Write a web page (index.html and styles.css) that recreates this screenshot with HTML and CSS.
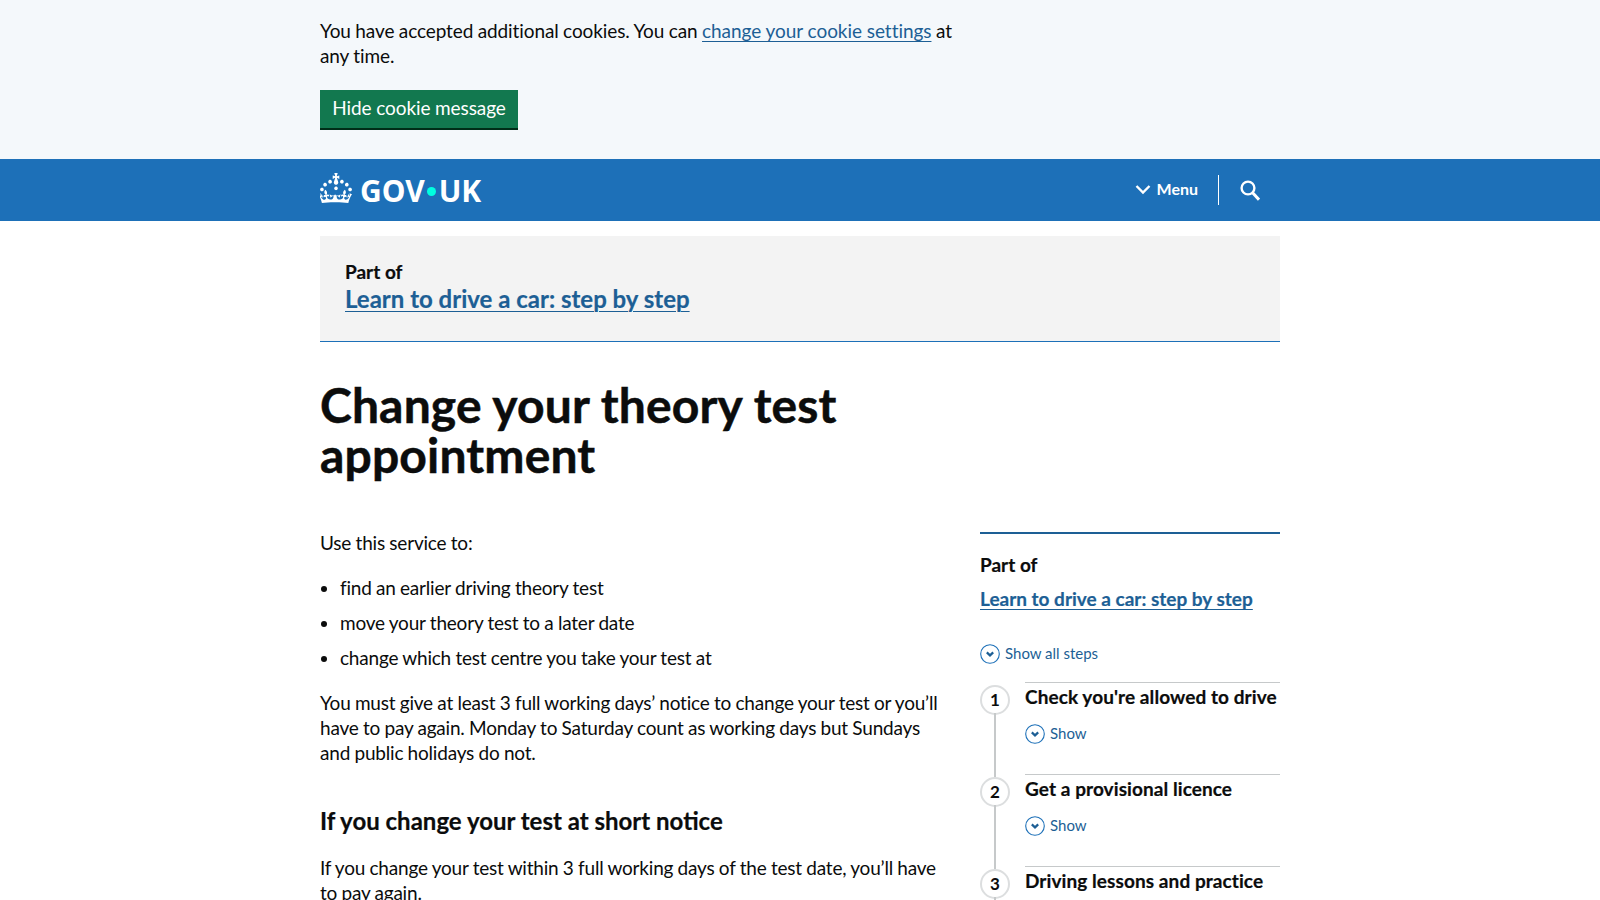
FILE: index.html
```html
<!DOCTYPE html>
<html lang="en">
<head>
<meta charset="utf-8">
<title>Change your theory test appointment - GOV.UK</title>
<link rel="stylesheet" href="styles.css">
</head>
<body>
<div class="cookie">
  <div class="wrap">
    <p class="cookie-text">You have accepted additional cookies. You can <a href="#">change your cookie settings</a> at any time.</p>
    <button class="hide-btn">Hide cookie message</button>
  </div>
</div>
<header class="top">
  <div class="wrap top-in">
    <a class="logo" href="#">
      <svg class="crown" viewBox="0 0 33 30" width="33" height="30" aria-hidden="true">
        <path fill="#fff" d="M22.6 10.4c-1 .4-2-.1-2.4-1-.4-.9.1-2 1-2.4.9-.4 2 .1 2.4 1s-.1 2-1 2.4m-5.9 6.7c-.9.4-2-.1-2.4-1-.4-.9.1-2 1-2.4.9-.4 2 .1 2.4 1s-.1 2-1 2.4m10.8-3.7c-1 .4-2-.1-2.4-1-.4-.9.1-2 1-2.4.9-.4 2 0 2.4 1s0 2-1 2.4m3.3 4.8c-1 .4-2-.1-2.4-1-.4-.9.1-2 1-2.4.9-.4 2-.1 2.4 1 .4.9-.1 2-1 2.4M17 4.7l2.3 1.2V2.5l-2.3.7-.2-.2.9-3h-3.4l.9 3-.2.2c-.1.1-2.3-.7-2.3-.7v3.4L15 4.7c.1.1.1.2.2.2l-1.3 4c-.1.2-.1.4-.1.6 0 1.1.8 2 1.9 2.2h.7c1-.2 1.9-1.1 1.9-2.2 0-.2 0-.4-.1-.6l-1.3-4c-.1-.1 0-.2.1-.2m-7.6 5.7c.9.4 2-.1 2.4-1 .4-.9-.1-2-1-2.4-.9-.4-2 .1-2.4 1s0 2 1 2.4m-5 3c.9.4 2-.1 2.4-1 .4-.9-.1-2-1-2.4-.9-.4-2 .1-2.4 1s.1 2 1 2.4m-3.2 4.8c.9.4 2-.1 2.4-1 .4-1-.1-2-1-2.4-.9-.3-2 .1-2.4 1-.3 1 .1 2 1 2.4m14.8 11c4.4 0 8.6.3 12.3.8 1.1-4.5 2.4-7 3.7-8.8l-2.5-.9c.2 1.3.3 1.9 0 2.7-.4-.4-.8-1.1-1.1-2.3l-1.2 4c.7-.5 1.3-.8 2-.9-1.1 2.5-2.6 3.1-3.5 3-1.1-.2-1.7-1.2-1.5-2.1.3-1.2 1.5-1.5 2.1-.1 1.1-2.3-.8-3-2-2.3 1.9-1.9 2.1-3.5.6-5.6-2.1 1.6-2.1 3.2-1.2 5.5-1.2-1.4-3.2-.6-2.5 1.6.9-1.4 2.1-.5 1.9.8-.2 1.1-1.7 2.1-3.5 1.9-2.7-.2-2.9-2.1-2.9-3.6.7-.1 1.9.5 2.9 1.9l1-3.6c-.9.6-2.1 1.4-3.5 1.4-.9 0-1.7-.4-2-1.3-.4.9-1.1 1.3-2 1.3-1.4 0-2.6-.8-3.5-1.4l1 3.6c1-1.4 2.2-2 2.9-1.9 0 1.6-.2 3.4-2.9 3.6-1.8.2-3.3-.8-3.5-1.9-.2-1.3 1-2.2 1.9-.8.7-2.1-1.3-3-2.5-1.6.9-2.2.9-3.9-1.2-5.5-1.5 2-1.3 3.7.6 5.6-1.2-.7-3.1 0-2 2.3.6-1.4 1.8-1.1 2.1.1.2.9-.3 1.9-1.5 2.1-.9.2-2.4-.5-3.5-3 .6 0 1.2.3 2 .9l-1.2-4c-.3 1.1-.7 1.9-1.1 2.3-.3-.8-.2-1.4 0-2.7l-2.5.9c1.3 1.9 2.6 4.3 3.7 8.8 3.7-.5 7.9-.8 12.3-.8"/>
      </svg>
      <span class="word">GOV<span class="dot"></span>UK</span>
    </a>
    <nav class="nav">
      <span class="menu">
        <svg class="chev" viewBox="0 0 16 11" width="16" height="11" aria-hidden="true"><path d="M1.5 2 8 8.5 14.5 2" fill="none" stroke="#fff" stroke-width="2.4"/></svg>
        Menu
      </span>
      <span class="search">
        <svg viewBox="0 0 20 21" width="20" height="21" aria-hidden="true"><circle cx="8" cy="8" r="6.4" fill="none" stroke="#fff" stroke-width="2.4"/><path d="M12.6 12.8 19 19.6" stroke="#fff" stroke-width="3" fill="none"/></svg>
      </span>
    </nav>
  </div>
</header>
<main class="wrap">
  <div class="partof-box">
    <p class="partof-label">Part of</p>
    <a class="partof-link" href="#">Learn to drive a car: step by step</a>
  </div>
  <h1>Change your theory test appointment</h1>
  <div class="cols">
    <div class="body-col">
      <p>Use this service to:</p>
      <ul>
        <li>find an earlier driving theory test</li>
        <li>move your theory test to a later date</li>
        <li>change which test centre you take your test at</li>
      </ul>
      <p>You must give at least 3 full working days’ notice to change your test or you’ll have to pay again. Monday to Saturday count as working days but Sundays and public holidays do not.</p>
      <h2>If you change your test at short notice</h2>
      <p>If you change your test within 3 full working days of the test date, you’ll have to pay again.</p>
    </div>
    <aside class="side">
      <p class="side-label">Part of</p>
      <a class="side-link" href="#">Learn to drive a car: step by step</a>
      <div class="show-all">
        <svg class="ring" viewBox="0 0 20 20" width="20" height="20" aria-hidden="true"><circle cx="10" cy="10" r="9.3" fill="none" stroke="#1d70b8" stroke-width="1.1"/><path d="M6.8 8.4 10 11.4l3.2-3" fill="none" stroke="#1d5f95" stroke-width="2.2"/></svg>
        <a href="#">Show all steps</a>
      </div>
      <ol class="steps">
        <li class="step">
          <span class="num">1</span>
          <div class="step-main">
            <h3>Check you're allowed to drive</h3>
            <div class="show">
              <svg class="ring" viewBox="0 0 20 20" width="20" height="20" aria-hidden="true"><circle cx="10" cy="10" r="9.3" fill="none" stroke="#1d70b8" stroke-width="1.1"/><path d="M6.8 8.4 10 11.4l3.2-3" fill="none" stroke="#1d5f95" stroke-width="2.2"/></svg>
              <a href="#">Show</a>
            </div>
          </div>
        </li>
        <li class="step">
          <span class="num">2</span>
          <div class="step-main">
            <h3>Get a provisional licence</h3>
            <div class="show">
              <svg class="ring" viewBox="0 0 20 20" width="20" height="20" aria-hidden="true"><circle cx="10" cy="10" r="9.3" fill="none" stroke="#1d70b8" stroke-width="1.1"/><path d="M6.8 8.4 10 11.4l3.2-3" fill="none" stroke="#1d5f95" stroke-width="2.2"/></svg>
              <a href="#">Show</a>
            </div>
          </div>
        </li>
        <li class="step">
          <span class="num">3</span>
          <div class="step-main">
            <h3>Driving lessons and practice</h3>
            <div class="show">
              <svg class="ring" viewBox="0 0 20 20" width="20" height="20" aria-hidden="true"><circle cx="10" cy="10" r="9.3" fill="none" stroke="#1d70b8" stroke-width="1.1"/><path d="M6.8 8.4 10 11.4l3.2-3" fill="none" stroke="#1d5f95" stroke-width="2.2"/></svg>
              <a href="#">Show</a>
            </div>
          </div>
        </li>
      </ol>
    </aside>
  </div>
</main>
</body>
</html>
```
FILE: styles.css
```css
* { box-sizing: border-box; }
html, body { margin: 0; padding: 0; height: 900px; overflow: hidden; }
body { font-family: Lato, "Liberation Sans", sans-serif; font-size: 19px; line-height: 25px; color: #0b0c0c; background: #fff; letter-spacing: -0.2px; word-spacing: -0.3px; }
a { color: #1d5f95; text-decoration: underline; text-underline-offset: 3px; text-decoration-thickness: 1px; }
p { margin: 0; }
.wrap { width: 960px; margin: 0 auto; }

.cookie { background: #f4f8fb; height: 159px; padding-top: 18px; }
.cookie-text { width: 640px; letter-spacing: -0.1px; }
.cookie-text a { word-spacing: 0; letter-spacing: -0.05px; }
.hide-btn { display: block; margin-top: 22px; width: 198px; height: 38px; padding: 0 0 3px; border: 0; background: #12784f; box-shadow: 0 2px 0 #002d18; color: #fff; font: inherit; letter-spacing: -0.1px; word-spacing: 0; }

.top { background: #1d70b8; height: 62px; }
.top-in { display: flex; align-items: center; justify-content: space-between; height: 62px; }
.logo { display: flex; align-items: center; gap: 7px; color: #fff; text-decoration: none; }
.crown { display: block; margin-bottom: 4px; }
.word { font-family: "Noto Sans", sans-serif; font-weight: 700; font-size: 30px; line-height: 34px; display: flex; align-items: center; letter-spacing: 0; padding-top: 2px; }
.dot { width: 9px; height: 9px; border-radius: 50%; background: #00ffe0; margin: 0 2.5px; }
.nav { display: flex; align-items: center; height: 32px; padding-right: 20px; }
.menu { display: flex; align-items: center; gap: 6px; padding: 0 20px 2px 0; height: 30px; border-right: 1px solid #fff; color: #fff; font-size: 16px; font-weight: 700; letter-spacing: 0; line-height: 26px; }
.chev { margin-left: 1px; }
.search { display: flex; align-items: center; padding-left: 21px; }

.partof-box { margin-top: 15px; height: 106px; padding: 23px 25px 0; background: #f3f3f3; border-bottom: 1px solid #1d70b8; }
.partof-label { font-weight: 700; letter-spacing: 0; word-spacing: 0; -webkit-text-stroke: 0.2px #0b0c0c; }
.partof-link { font-size: 24px; line-height: 30px; font-weight: 700; display: inline-block; letter-spacing: 0; word-spacing: 0; -webkit-text-stroke: 0.2px #1d5f95; }

h1 { margin: 38px 0 0; width: 620px; font-size: 48px; line-height: 50px; font-weight: 700; letter-spacing: 0.15px; word-spacing: 0; -webkit-text-stroke: 0.5px #0b0c0c; }

.cols { display: flex; justify-content: space-between; margin-top: 50px; }
.body-col { width: 630px; }
.body-col ul { margin: 20px 0; padding: 0 0 0 20px; }
.body-col li { margin-bottom: 10px; }
.body-col h2 { margin: 41px 0 19px; font-size: 24px; line-height: 30px; font-weight: 700; letter-spacing: 0; word-spacing: 0; -webkit-text-stroke: 0.2px #0b0c0c; }

.side { width: 300px; border-top: 2px solid #1d5f95; padding-top: 18px; margin-top: 2px; word-spacing: 0; }
.side-label { font-weight: 700; letter-spacing: 0; -webkit-text-stroke: 0.2px #0b0c0c; }
.side-link { display: inline-block; margin-top: 9px; font-weight: 700; letter-spacing: 0; -webkit-text-stroke: 0.2px #1d5f95; }
.show-all { display: flex; align-items: center; gap: 5px; margin-top: 32px; font-size: 15px; line-height: 20px; letter-spacing: 0; }
.show-all a, .show a { text-decoration: none; padding-bottom: 1px; }
.ring { display: block; flex: none; }

.steps { list-style: none; margin: 18px 0 0; padding: 0; }
.step { position: relative; display: flex; gap: 15px; height: 92px; }
.step::before { content: ""; position: absolute; left: 14px; top: 31px; bottom: -3px; width: 2px; background: #c6c9ca; }
.num { flex: none; display: flex; align-items: center; justify-content: center; width: 30px; height: 30px; margin-top: 3px; padding-bottom: 2px; border: 2px solid #dcdedf; border-radius: 50%; background: #fff; font-weight: 700; font-size: 17px; letter-spacing: 0; }
.step-main { flex: 1; border-top: 1px solid #c6c9ca; padding-top: 1px; }
.step-main h3 { margin: 0; font-size: 19px; line-height: 25px; font-weight: 700; white-space: nowrap; letter-spacing: 0.08px; -webkit-text-stroke: 0.2px #0b0c0c; }
.show { display: flex; align-items: center; gap: 5px; margin-top: 14px; font-size: 15px; line-height: 20px; letter-spacing: 0; }
```
